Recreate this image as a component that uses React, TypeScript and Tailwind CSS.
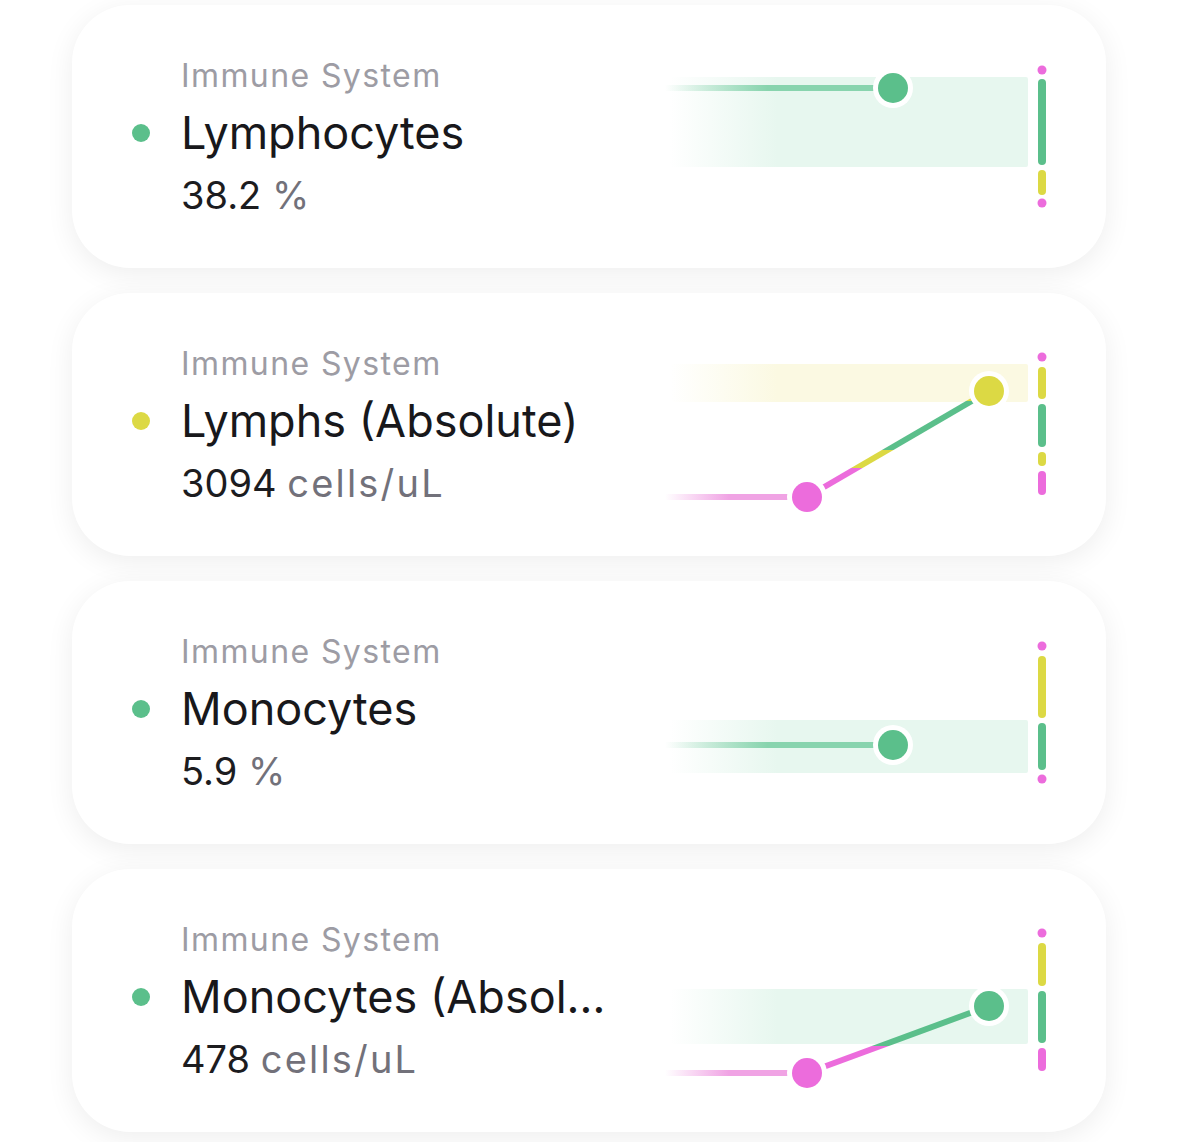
import React from "react";

const G = "#5bbf8b";
const Y = "#dcd944";
const P = "#ec6cdc";
const GL = "#88d4ae";
const PL = "#f0a3e4";
const BG = "#e7f7ef";
const BY = "#fbf9e2";

type Seg = { y1: number; y2: number; c: string; dot?: boolean };
type Pt = { x: number; y: number; c: string };
type Card = {
  id: string;
  name: string;
  value: string;
  unit: string;
  dot: string;
  segs: Seg[];
  band: { y1: number; y2: number; c: string };
  lead: string;
  pts: Pt[];
  stops?: { at: number; c: string }[];
};

const cards: Card[] = [
  {
    id: "c1",
    name: "Lymphocytes",
    value: "38.2",
    unit: "%",
    dot: G,
    segs: [
      { y1: 65, y2: 65, c: P, dot: true },
      { y1: 74, y2: 160, c: G },
      { y1: 165, y2: 190, c: Y },
      { y1: 198, y2: 198, c: P, dot: true },
    ],
    band: { y1: 72, y2: 162, c: BG },
    lead: GL,
    pts: [{ x: 233, y: 83, c: G }],
  },
  {
    id: "c2",
    name: "Lymphs (Absolute)",
    value: "3094",
    unit: "cells/uL",
    dot: Y,
    segs: [
      { y1: 64, y2: 64, c: P, dot: true },
      { y1: 74, y2: 106, c: Y },
      { y1: 111, y2: 154, c: G },
      { y1: 159, y2: 173, c: Y },
      { y1: 178, y2: 202, c: P },
    ],
    band: { y1: 71, y2: 109, c: BY },
    lead: PL,
    pts: [
      { x: 147, y: 204, c: P },
      { x: 329, y: 98, c: Y },
    ],
    stops: [
      { at: 0, c: Y },
      { at: 108.5, c: Y },
      { at: 108.5, c: G },
      { at: 156.5, c: G },
      { at: 156.5, c: Y },
      { at: 175.5, c: Y },
      { at: 175.5, c: P },
      { at: 263, c: P },
    ],
  },
  {
    id: "c3",
    name: "Monocytes",
    value: "5.9",
    unit: "%",
    dot: G,
    segs: [
      { y1: 65, y2: 65, c: P, dot: true },
      { y1: 75, y2: 137, c: Y },
      { y1: 142, y2: 189, c: G },
      { y1: 198, y2: 198, c: P, dot: true },
    ],
    band: { y1: 139, y2: 192, c: BG },
    lead: GL,
    pts: [{ x: 233, y: 164, c: G }],
  },
  {
    id: "c4",
    name: "Monocytes (Absolute)",
    value: "478",
    unit: "cells/uL",
    dot: G,
    segs: [
      { y1: 64, y2: 64, c: P, dot: true },
      { y1: 74, y2: 117, c: Y },
      { y1: 122, y2: 174, c: G },
      { y1: 179, y2: 202, c: P },
    ],
    band: { y1: 120, y2: 175, c: BG },
    lead: PL,
    pts: [
      { x: 147, y: 204, c: P },
      { x: 329, y: 137, c: G },
    ],
    stops: [
      { at: 0, c: Y },
      { at: 119.5, c: Y },
      { at: 119.5, c: G },
      { at: 176.5, c: G },
      { at: 176.5, c: P },
      { at: 263, c: P },
    ],
  },
];

function Chart({ card }: { card: Card }) {
  const first = card.pts[0];
  const last = card.pts[card.pts.length - 1];
  return (
    <svg width={390} height={263} viewBox="0 0 390 263" className="shrink-0">
      <defs>
        <linearGradient id={`band-${card.id}`} x1="10" y1="0" x2="368" y2="0" gradientUnits="userSpaceOnUse">
          <stop offset="0" stopColor={card.band.c} stopOpacity="0" />
          <stop offset="0.3" stopColor={card.band.c} stopOpacity="1" />
          <stop offset="1" stopColor={card.band.c} stopOpacity="1" />
        </linearGradient>
        <linearGradient id={`lead-${card.id}`} x1="5" y1="0" x2={first.x} y2="0" gradientUnits="userSpaceOnUse">
          <stop offset="0" stopColor={card.lead} stopOpacity="0" />
          <stop offset="0.45" stopColor={card.lead} stopOpacity="1" />
          <stop offset="1" stopColor={card.lead} stopOpacity="1" />
        </linearGradient>
        {card.stops && (
          <linearGradient id={`conn-${card.id}`} x1="0" y1="0" x2="0" y2="263" gradientUnits="userSpaceOnUse">
            {card.stops.map((s, i) => (
              <stop key={i} offset={s.at / 263} stopColor={s.c} />
            ))}
          </linearGradient>
        )}
      </defs>
      <rect
        x={10}
        y={card.band.y1}
        width={358}
        height={card.band.y2 - card.band.y1}
        rx={2}
        fill={`url(#band-${card.id})`}
      />
      <line
        x1={5}
        y1={first.y}
        x2={first.x}
        y2={first.y}
        stroke={`url(#lead-${card.id})`}
        strokeWidth={6}
      />
      {card.pts.length > 1 && (
        <line
          x1={first.x}
          y1={first.y}
          x2={last.x}
          y2={last.y}
          stroke={`url(#conn-${card.id})`}
          strokeWidth={6}
        />
      )}
      {card.pts.map((p, i) => (
        <g key={i}>
          <circle cx={p.x} cy={p.y} r={20} fill="#ffffff" />
          <circle cx={p.x} cy={p.y} r={15} fill={p.c} />
        </g>
      ))}
      {card.segs.map((s, i) =>
        s.dot ? (
          <circle key={i} cx={382} cy={s.y1} r={4.5} fill={s.c} />
        ) : (
          <line
            key={i}
            x1={382}
            y1={s.y1 + 4}
            x2={382}
            y2={s.y2 - 4}
            stroke={s.c}
            strokeWidth={8}
            strokeLinecap="round"
          />
        )
      )}
    </svg>
  );
}

function CardView({ card }: { card: Card }) {
  return (
    <div className="flex h-[263px] w-[1034px] items-start overflow-hidden rounded-[58px] bg-white shadow-[0_6px_28px_rgba(0,0,0,0.07)]">
      <div className="flex min-w-0 flex-1 flex-col pl-[60px] pt-[42px]">
        <div className="flex items-center gap-[31px]">
          <span className="w-[18px] shrink-0" />
          <span className="text-[32px] leading-[58px] tracking-[1.4px] text-[#9d9ca4]">Immune System</span>
        </div>
        <div className="flex items-center gap-[31px]">
          <span className="h-[18px] w-[18px] shrink-0 rounded-full" style={{ backgroundColor: card.dot }} />
          <span className="max-w-[432px] truncate text-[45px] leading-[56px] text-[#18181b]">{card.name}</span>
        </div>
        <div className="flex items-center gap-[31px]">
          <span className="w-[18px] shrink-0" />
          <span className="text-[38px] leading-[68px] text-[#1c1c1f]">
            {card.value}{" "}
            <span className="tracking-[2.2px] text-[#72717a]">{card.unit}</span>
          </span>
        </div>
      </div>
      <div className="mr-[56px]">
        <Chart card={card} />
      </div>
    </div>
  );
}

export default function App() {
  return (
    <div
      className="flex min-h-screen flex-col gap-[25px] bg-white pl-[72px] pt-[5px]"
      style={{ fontFamily: "Inter, 'Noto Sans', sans-serif" }}
    >
      {cards.map((c) => (
        <CardView key={c.id} card={c} />
      ))}
    </div>
  );
}
